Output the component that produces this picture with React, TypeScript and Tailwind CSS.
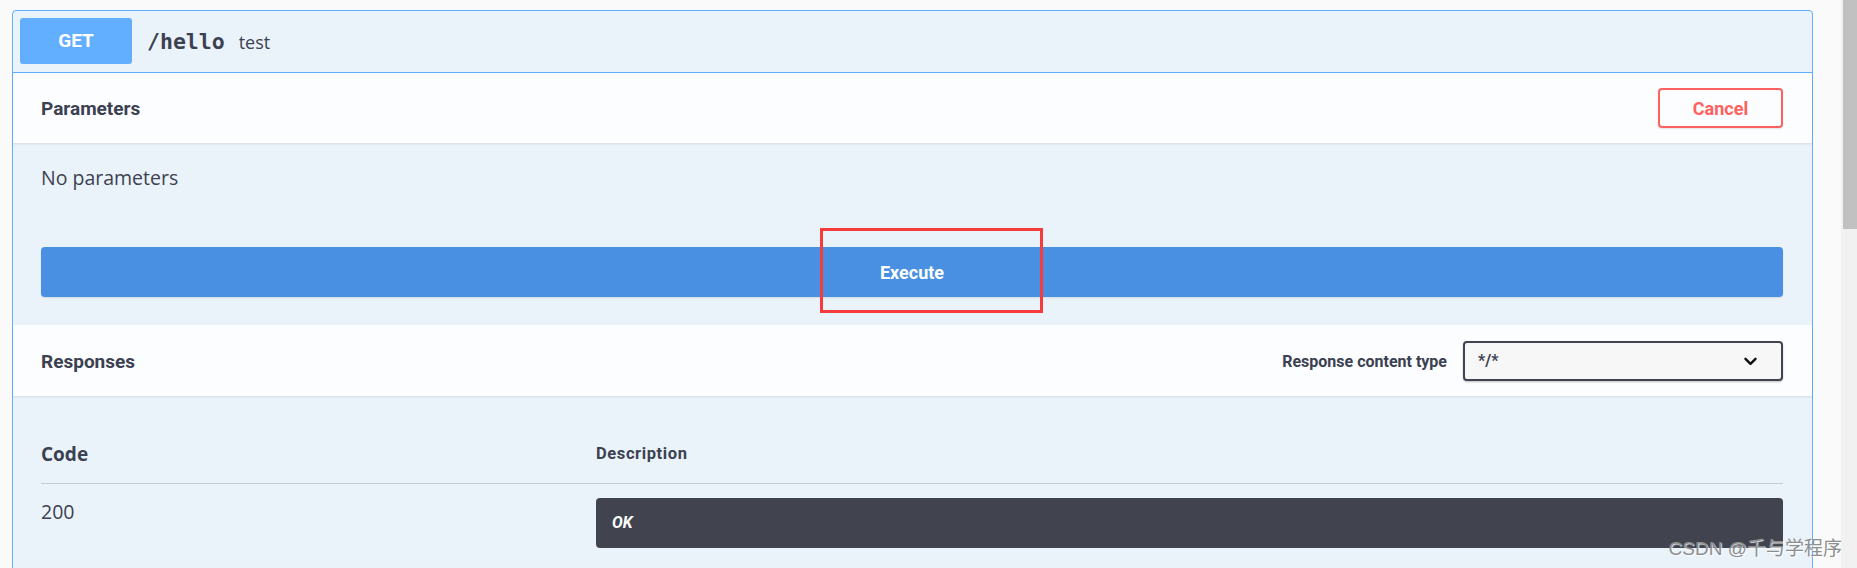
import React from "react";

export default function App() {
  return (
    <div className="relative flex h-[568px] w-[1857px] overflow-hidden bg-[#fafafa] text-[#3b4151] font-['Open_Sans',sans-serif]">
      <div className="flex-1 pl-[12px] pr-[28px] pt-[10px]">
        <div className="rounded-[4px] border border-[#61affe] bg-[#ebf3fa] h-[600px]">
          {/* summary */}
          <div className="flex items-center border-b border-[#61affe] pl-[7px] pt-[7px] pb-[8px]">
            <div className="flex h-[46px] w-[112px] items-center justify-center rounded-[3px] bg-[#61affe] font-['Roboto',sans-serif] text-[19px] font-bold text-white">
              GET
            </div>
            <div className="ml-[15px] pt-[2px] font-['DejaVu_Sans_Mono',monospace] text-[21.5px] font-bold text-[#3b4151]">
              /hello
            </div>
            <div className="ml-[14px] pt-[2px] text-[18px] text-[#3b4151]">test</div>
          </div>

          {/* parameters header */}
          <div className="flex h-[70px] items-center justify-between bg-[#fbfdfe] pl-[28px] pr-[29px] shadow-[0_1px_2px_rgba(0,0,0,0.1)]">
            <div className="pt-[2px] font-['Roboto',sans-serif] text-[19px] font-bold">Parameters</div>
            <div className="flex h-[40px] w-[125px] items-center justify-center rounded-[4px] border-2 border-[#ff6060] font-['Roboto',sans-serif] text-[18px] font-bold text-[#ff6060] shadow-[0_1px_2px_rgba(0,0,0,0.1)]">
              Cancel
            </div>
          </div>

          {/* body */}
          <div className="pl-[28px] pr-[29px] pt-[21px] pb-[28px]">
            <div className="text-[19.5px] leading-[28px]">No parameters</div>
            <div className="mt-[55px] flex h-[50px] items-center justify-center rounded-[4px] bg-[#4990e2] font-['Roboto',sans-serif] text-[18px] font-bold text-white shadow-[0_1px_2px_rgba(0,0,0,0.1)]">
              Execute
            </div>
          </div>

          {/* responses header */}
          <div className="flex h-[71px] items-center justify-between bg-[#fbfdfe] pl-[28px] pr-[29px] shadow-[0_1px_2px_rgba(0,0,0,0.1)]">
            <div className="pt-[4px] font-['Roboto',sans-serif] text-[19px] font-bold">Responses</div>
            <div className="flex items-center">
              <div className="pt-[3px] font-['Roboto',sans-serif] text-[16px] font-bold">Response content type</div>
              <div className="ml-[16px] mt-[1px] flex h-[40px] w-[320px] items-center justify-between rounded-[4px] border-2 border-[#41444e] bg-[#f7f7f7] pl-[13px] pr-[24px] shadow-[0_1px_2px_rgba(0,0,0,0.25)]">
                <span className="font-['Roboto',sans-serif] text-[16px] font-bold">*/*</span>
                <svg width="13" height="9" viewBox="0 0 13 9" fill="none">
                  <path d="M1.5 1.8 L6.5 6.8 L11.5 1.8" stroke="#111" strokeWidth="2.4" strokeLinecap="round" strokeLinejoin="round" />
                </svg>
              </div>
            </div>
          </div>

          {/* table */}
          <div className="pl-[28px] pr-[29px] pt-[45px]">
            <div className="flex items-center border-b border-[#c5ccd6] pb-[16px]">
              <div className="w-[555px] text-[19px] font-bold leading-[26px]">Code</div>
              <div className="font-['Roboto',sans-serif] text-[16.5px] font-bold tracking-[0.6px] leading-[26px]">Description</div>
            </div>
            <div className="flex items-start pt-[14px]">
              <div className="w-[555px] text-[19.5px] leading-[28px]">200</div>
              <div className="flex h-[50px] flex-1 items-center rounded-[4px] bg-[#41444e] pl-[16px]">
                <span className="font-['Roboto',sans-serif] text-[16px] font-bold italic text-white">OK</span>
              </div>
            </div>
          </div>
        </div>
      </div>

      {/* scrollbar */}
      <div className="w-[16px] bg-[#f1f1f1]">
        <div className="ml-[2px] h-[229px] bg-[#c1c1c1]" />
      </div>

      {/* annotation box */}
      <div className="absolute left-[820px] top-[228px] h-[85px] w-[223px] border-[3px] border-[#f53b3b]" />

      {/* watermark */}
      <div className="absolute right-[15px] top-[537px] font-['Liberation_Sans','Noto_Sans_CJK_SC',sans-serif] text-[19px] leading-[24px] text-[#8e8e8e] [text-shadow:1px_1px_1px_rgba(255,255,255,0.9)]">
        CSDN @千与学程序
      </div>
    </div>
  );
}
